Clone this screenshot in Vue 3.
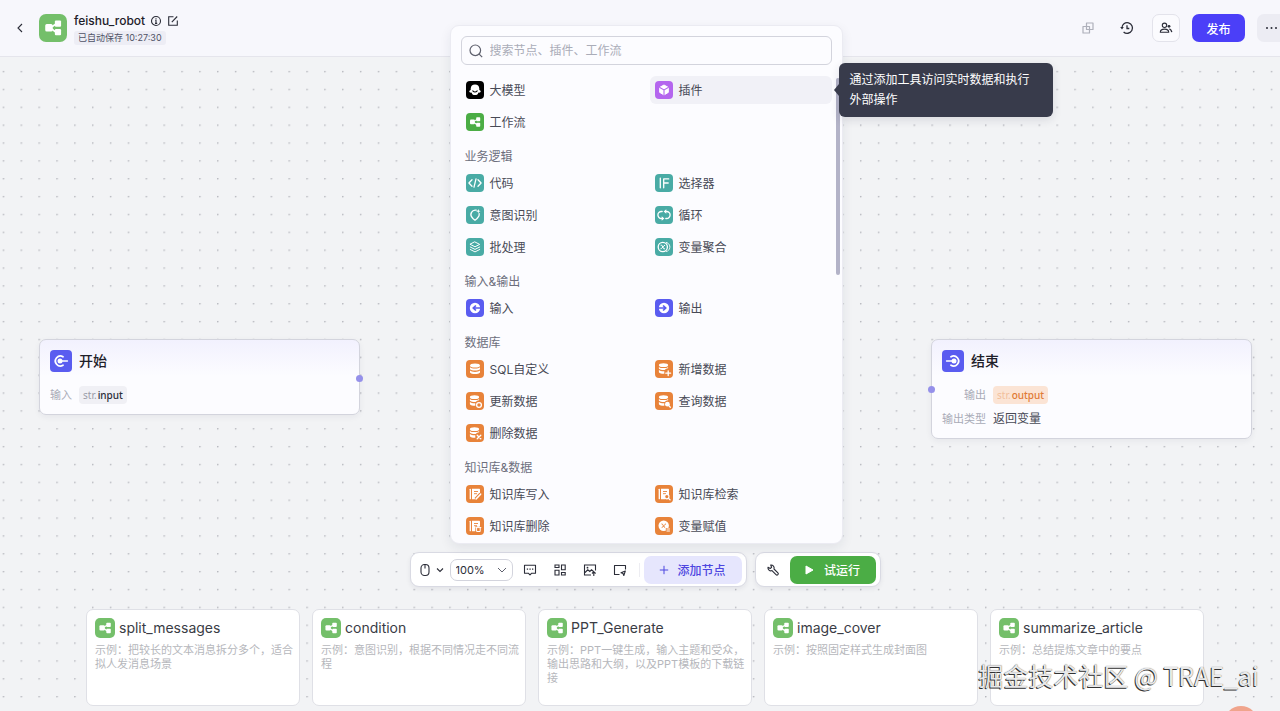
<script setup>
import { ref } from 'vue'

const keyword = ref('')
const zoomLevel = ref('100%')
const hovered = ref('plugin')

const groups = [
  {
    title: '',
    items: [
      { id: 'llm', label: '大模型', tone: 'black' },
      { id: 'plugin', label: '插件', tone: 'purple' },
      { id: 'flow', label: '工作流', tone: 'green' }
    ]
  },
  {
    title: '业务逻辑',
    items: [
      { id: 'code', label: '代码', tone: 'teal' },
      { id: 'if', label: '选择器', tone: 'teal' },
      { id: 'intent', label: '意图识别', tone: 'teal' },
      { id: 'loop', label: '循环', tone: 'teal' },
      { id: 'batch', label: '批处理', tone: 'teal' },
      { id: 'merge', label: '变量聚合', tone: 'teal' }
    ]
  },
  {
    title: '输入&输出',
    items: [
      { id: 'in', label: '输入', tone: 'indigo' },
      { id: 'out', label: '输出', tone: 'indigo' }
    ]
  },
  {
    title: '数据库',
    items: [
      { id: 'db', label: 'SQL自定义', tone: 'orange' },
      { id: 'db-add', label: '新增数据', tone: 'orange' },
      { id: 'db-update', label: '更新数据', tone: 'orange' },
      { id: 'db-query', label: '查询数据', tone: 'orange' },
      { id: 'db-delete', label: '删除数据', tone: 'orange' }
    ]
  },
  {
    title: '知识库&数据',
    items: [
      { id: 'kb-write', label: '知识库写入', tone: 'orange' },
      { id: 'kb-search', label: '知识库检索', tone: 'orange' },
      { id: 'kb-delete', label: '知识库删除', tone: 'orange' },
      { id: 'assign', label: '变量赋值', tone: 'orange' }
    ]
  }
]

const examples = [
  { name: 'split_messages', text: '示例：把较长的文本消息拆分多个，适合拟人发消息场景' },
  { name: 'condition', text: '示例：意图识别，根据不同情况走不同流程' },
  { name: 'PPT_Generate', text: '示例：PPT一键生成，输入主题和受众，输出思路和大纲，以及PPT模板的下载链接' },
  { name: 'image_cover', text: '示例：按照固定样式生成封面图' },
  { name: 'summarize_article', text: '示例：总结提炼文章中的要点' }
]
</script>

<template>
  <div class="page">
    <svg class="sprite" aria-hidden="true">
      <symbol id="i-flow" viewBox="0 0 18 18">
        <g fill="#fff">
          <rect x="4" y="6.500" width="4.800" height="4.800" rx="1" />
          <rect x="10.200" y="4.200" width="4" height="4" rx=".7" />
          <rect x="10.200" y="9.700" width="4" height="4" rx=".7" />
        </g>
        <path d="M8 8.400 11 6.400M8 9.500l3 2.200" stroke="#fff" stroke-width="1.100" />
      </symbol>
      <symbol id="i-llm" viewBox="0 0 18 18">
        <path fill="#fff" d="M9 3.600a4.300 4.300 0 0 1 4.300 4v1.500c1.600.5 2 2.200.6 2.500-.7.200-1.200.1-1.600-.100-.2 1.800-1.300 2.600-3.300 2.600s-3.100-.8-3.300-2.600c-.4.200-.9.300-1.600.100-1.400-.3-1-2 .6-2.500V7.600A4.300 4.300 0 0 1 9 3.600z" />
        <path d="M6.800 9.800q2.200 2.400 4.400 0" fill="none" stroke="#000" stroke-width="1.100" stroke-linecap="round" />
      </symbol>
      <symbol id="i-plugin" viewBox="0 0 18 18">
        <path fill="#fff" stroke="#fff" stroke-linejoin="round" d="m9 4 4.300 2.400v5L9 13.900l-4.300-2.500v-5z" />
        <path d="M4.300 6.300 9 8.900l4.700-2.600M9 8.900V14" fill="none" stroke="#b465ee" stroke-width="1.100" />
      </symbol>
      <symbol id="i-code" viewBox="0 0 18 18">
        <path d="M6 5.800 2.900 9 6 12.200M12 5.800 15.100 9 12 12.200M10 4.900l-2 8.200" class="line" />
      </symbol>
      <symbol id="i-if" viewBox="0 0 18 18">
        <path d="M5.300 4.200v9.600M8.700 13.800V4.900h5M8.700 9h4.500" class="line" />
      </symbol>
      <symbol id="i-intent" viewBox="0 0 18 18">
        <path d="M10.200 4.200a4.400 4.400 0 0 0-4.100 7.300l1.100 1.200L9 14.200l1.800-1.500 1.100-1.200a4.300 4.300 0 0 0 1.300-3.800" class="line" />
        <path d="m12.300 3 .6 1.600 1.600.6-1.600.6-.6 1.600-.6-1.600-1.600-.6 1.600-.6z" fill="#fff" />
      </symbol>
      <symbol id="i-loop" viewBox="0 0 18 18">
        <path d="M7.200 5.500H6.400a3.500 3.500 0 0 0 0 7h1.300M10.800 12.500h.8a3.500 3.500 0 0 0 0-7h-1.300" class="line" />
        <path d="M11.300 3.300v4.400L8.600 5.500zM6.700 10.300v4.400l2.700-2.200z" fill="#fff" />
      </symbol>
      <symbol id="i-batch" viewBox="0 0 18 18">
        <path d="m9 4 4.700 2.400L9 8.800 4.300 6.400zM4.300 9 9 11.400 13.700 9M4.300 11.500 9 13.900l4.700-2.400" class="line thin" />
      </symbol>
      <symbol id="i-merge" viewBox="0 0 18 18">
        <circle cx="7.800" cy="9" r="4.600" class="line" />
        <path d="M11.500 4.500a4.700 4.700 0 0 1 0 9" class="line thin" stroke-dasharray="1.200 1" />
        <path d="M6 7.200h.8l2 3.600h.8M9.700 7.200c-1.200 0-2.300 3.600-3.800 3.600" class="line thin" />
      </symbol>
      <symbol id="i-in" viewBox="0 0 18 18">
        <circle cx="9" cy="9" r="5.200" fill="#fff" />
        <path d="M15 9H7.700M9.900 6.500 7.300 9l2.600 2.500" fill="none" stroke="#5a5cf0" stroke-width="1.700" />
      </symbol>
      <symbol id="i-out" viewBox="0 0 18 18">
        <circle cx="9" cy="9" r="5.200" fill="#fff" />
        <path d="M3 9h7.300M8.100 6.500 10.700 9l-2.600 2.500" fill="none" stroke="#5a5cf0" stroke-width="1.700" />
      </symbol>
      <symbol id="i-db" viewBox="0 0 18 18">
        <g fill="#fff">
          <ellipse cx="9" cy="5.500" rx="5" ry="2" />
          <path d="M4 7.200c1.500 1.700 8.500 1.700 10 0v2c-1.500 1.700-8.500 1.700-10 0zM4 10.600c1.500 1.700 8.500 1.700 10 0v2c-1.500 2-8.500 2-10 0z" />
        </g>
      </symbol>
      <symbol id="i-db-part" viewBox="0 0 18 18">
        <g fill="#fff">
          <ellipse cx="8.500" cy="5.200" rx="4.600" ry="1.900" />
          <path d="M3.900 6.900c1.400 1.600 7.800 1.600 9.200 0v1.400c-1.900.2-2.800 1-3.400 1.800-2.200.1-4.800-.2-5.800-1.300zM3.900 10.100c1 1 3.300 1.300 5.400 1.200v2.500c-2 .1-4.500-.2-5.400-1.500z" />
        </g>
      </symbol>
      <symbol id="i-db-add" viewBox="0 0 18 18">
        <use href="#i-db-part" />
        <path d="M13.200 10.800v4.800M10.800 13.200h4.800" class="line" />
      </symbol>
      <symbol id="i-db-update" viewBox="0 0 18 18">
        <use href="#i-db-part" />
        <circle cx="13" cy="13" r="2.400" class="line" />
      </symbol>
      <symbol id="i-db-query" viewBox="0 0 18 18">
        <use href="#i-db-part" />
        <circle cx="12.400" cy="12.200" r="2.400" fill="#fff" />
        <path d="m13.800 13.600 1.500 1.600" class="line" />
      </symbol>
      <symbol id="i-db-delete" viewBox="0 0 18 18">
        <use href="#i-db-part" />
        <path d="m11.200 11.200 3.600 3.600M14.800 11.200l-3.600 3.600" class="line" />
      </symbol>
      <symbol id="i-book" viewBox="0 0 18 18">
        <path d="M4.300 4.300v9.400" class="line" />
        <path d="M6 3.700h7.300q.7 0 .7.700v4.800l-4 5H6z" fill="#fff" />
        <path d="M8 6.500h4M8 8.700h3" stroke="#e8833a" stroke-width=".9" />
      </symbol>
      <symbol id="i-kb-write" viewBox="0 0 18 18">
        <use href="#i-book" />
        <path d="m9.700 14.200 5-5.400" stroke="#e8833a" stroke-width="3.200" />
        <path d="m10.300 13.800 4.300-4.600" stroke="#fff" stroke-width="1.600" stroke-linecap="round" />
      </symbol>
      <symbol id="i-kb-search" viewBox="0 0 18 18">
        <use href="#i-book" />
        <circle cx="11.800" cy="11.600" r="2.200" fill="#e8833a" stroke="#fff" stroke-width="1.200" />
        <path d="m13.400 13.200 1.700 1.700" class="line" />
      </symbol>
      <symbol id="i-kb-delete" viewBox="0 0 18 18">
        <use href="#i-book" />
        <rect x="9.300" y="9.300" width="5.800" height="5.800" fill="#e8833a" />
        <path d="M9.900 10.600h5M10.600 10.800v3.700h3.600v-3.700M11.600 9.700h1.600" class="line thin" />
      </symbol>
      <symbol id="i-assign" viewBox="0 0 18 18">
        <circle cx="8.700" cy="8.700" r="5.200" fill="#fff" />
        <path d="M6.500 6.900q1.100-.2 1.700 1.500t1.900 2.100M10.900 6.900c-1.300 0-2.600 3.600-4.200 3.600" fill="none" stroke="#e8833a" />
        <rect x="10.800" y="11" width="4.600" height="3.900" fill="#e8833a" />
        <path d="M11.500 12h3.400M11.500 14h3.400" stroke="#fff" />
      </symbol>
    </svg>

    <header class="topbar">
      <button class="plain back" aria-label="返回">
        <svg width="14" height="14" viewBox="0 0 14 14"><path d="M9 3 5 7l4 4" class="ink" /></svg>
      </button>
      <span class="logo"><svg width="28" height="28"><use href="#i-flow" /></svg></span>
      <div class="titles">
        <div class="title-row">
          <h1>feishu_robot</h1>
          <svg width="12" height="12" viewBox="0 0 12 12">
            <circle cx="6" cy="6" r="4.500" class="ink" />
            <path d="M5.200 5.300H6v3M5 8.400h2.200M6 3.200v1" class="ink" />
          </svg>
          <svg width="12" height="12" viewBox="0 0 12 12">
            <path d="M6.500 1.700h-4.800v8.600h8.600V5.500M4.800 7.200l5.400-5.700" class="ink" />
          </svg>
        </div>
        <span class="saved">已自动保存 10:27:30</span>
      </div>
      <div class="actions">
        <button class="plain" aria-label="复制" disabled>
          <svg width="12" height="12" viewBox="0 0 12 12">
            <path d="M4.500 1h6.500v6.500H4.500zM1 4.500h6.500V11H1z" fill="none" stroke="#aeb0ba" stroke-width="1.200" stroke-linejoin="round" />
          </svg>
        </button>
        <button class="plain" aria-label="历史">
          <svg width="14" height="14" viewBox="0 0 14 14">
            <path d="M1.900 7a5.300 5.300 0 1 1 1.700 3.900M7 4.300V7.500h2.300" class="ink bold" />
            <path d="M.2 6h3.600L2 8.400z" fill="#2b2d38" />
          </svg>
        </button>
        <button class="square" aria-label="协作者">
          <svg width="14" height="14" viewBox="0 0 14 14">
            <circle cx="5.500" cy="4.300" r="2.200" class="ink" />
            <path d="M1.300 11.300c0-4.200 8.400-4.200 8.400 0z" class="ink" stroke-linejoin="round" />
            <circle cx="10" cy="5.300" r="1.400" fill="#2b2d38" />
            <path d="M10.400 7.900q2 .8 2.400 3.200" class="ink bold" />
          </svg>
        </button>
        <button class="publish">发布</button>
        <button class="more" aria-label="更多">
          <svg width="14" height="4" viewBox="0 0 14 4" fill="#2b2d38">
            <circle cx="2" cy="2" r="1" /><circle cx="6.500" cy="2" r="1" /><circle cx="11" cy="2" r="1" />
          </svg>
        </button>
      </div>
    </header>

    <main class="canvas">
      <svg class="grid" aria-hidden="true">
        <defs>
          <pattern id="dots" x="2.700" y="13.900" width="17.860" height="17.860" patternUnits="userSpaceOnUse">
            <circle cx=".8" cy=".8" r=".75" fill="#a3a5ad" />
          </pattern>
        </defs>
        <rect width="100%" height="100%" fill="url(#dots)" />
      </svg>

      <section class="node start">
        <div class="node-head">
          <span class="node-icon">
            <svg width="22" height="22" viewBox="0 0 22 22">
              <path d="M13 6.700a5 5 0 1 0 0 8.600" class="line fat" />
              <circle cx="10" cy="11" r="2.500" fill="#fff" />
              <path d="M10 11h7.500" class="line" />
            </svg>
          </span>
          <h2>开始</h2>
        </div>
        <dl>
          <dt>输入</dt>
          <dd><span class="tag"><i>str.</i>input</span></dd>
        </dl>
        <span class="port"></span>
      </section>

      <section class="node end">
        <div class="node-head">
          <span class="node-icon">
            <svg width="22" height="22" viewBox="0 0 22 22">
              <path d="M9 6.700a5 5 0 1 1 0 8.600" class="line fat" />
              <circle cx="12" cy="11" r="2.500" fill="#fff" />
              <path d="M12 11H4.500" class="line" />
            </svg>
          </span>
          <h2>结束</h2>
        </div>
        <dl>
          <dt>输出</dt>
          <dd><span class="tag warm"><i>str.</i>output</span></dd>
          <dt>输出类型</dt>
          <dd class="value">返回变量</dd>
        </dl>
        <span class="port"></span>
      </section>

      <div class="dock">
        <div class="tools">
          <div class="popup">
            <label class="search">
              <svg width="14" height="14" viewBox="0 0 14 14">
                <circle cx="6.300" cy="6.300" r="5.300" fill="none" stroke="#5f616e" stroke-width="1.200" />
                <path d="m10.200 10.200 3 3" stroke="#5f616e" stroke-width="1.200" />
              </svg>
              <input v-model="keyword" type="text" aria-label="搜索" placeholder="搜索节点、插件、工作流" />
            </label>
            <div class="list">
              <section v-for="g in groups" :key="g.title">
                <h3 v-if="g.title">{{ g.title }}</h3>
                <div class="items">
                  <button
                    v-for="it in g.items"
                    :key="it.id"
                    class="item"
                    :class="{ active: hovered === it.id }"
                    @mouseenter="hovered = it.id"
                  >
                    <span class="chip" :class="it.tone"><svg width="18" height="18"><use :href="'#i-' + it.id" /></svg></span>
                    <span class="label">{{ it.label }}</span>
                  </button>
                </div>
              </section>
            </div>
            <span class="thumb"></span>
            <div class="tooltip" role="tooltip">通过添加工具访问实时数据和执行外部操作</div>
          </div>

          <div class="bar">
            <button class="plain mouse" aria-label="交互模式">
              <svg width="10" height="14" viewBox="0 0 10 14">
                <rect x="1" y="1.500" width="8" height="11" rx="3.500" class="ink" />
                <path d="M5 1.500v4" class="ink" />
              </svg>
              <svg width="8" height="8" viewBox="0 0 8 8"><path d="m1 2.500 3 3 3-3" class="ink" /></svg>
            </button>
            <span class="zoom">
              <select v-model="zoomLevel" aria-label="缩放">
                <option>50%</option>
                <option>100%</option>
                <option>200%</option>
              </select>
              <svg width="10" height="8" viewBox="0 0 10 8"><path d="m1 2 4 4 4-4" class="ink soft" /></svg>
            </span>
            <button class="plain tool" aria-label="注释">
              <svg width="14" height="14" viewBox="0 0 14 14">
                <path d="M1.500 2.200h11v8H8.700L7 11.900l-1.700-1.700H1.500z" class="ink" stroke-linejoin="round" />
                <path d="M3.800 6.200h1.300M6.400 6.200h1.300M9 6.200h1.300" class="ink bold" />
              </svg>
            </button>
            <button class="plain tool" aria-label="整理布局">
              <svg width="14" height="14" viewBox="0 0 14 14">
                <path d="M2 2h4v2.500H2zM2 7.200h4V12H2zM8.500 2h3.700v4.800H8.500zM8.500 9.500h3.700V12H8.500z" class="ink" />
              </svg>
            </button>
            <button class="plain tool" aria-label="导出图片">
              <svg width="14" height="14" viewBox="0 0 14 14">
                <path d="M8 12H1.500V2h11v5.500M2 9.500l2.800-2.700 2 1.700 1.700-1.700 2 1.700M10.800 13V9.200M9 10.500l1.800-1.800 1.800 1.800" class="ink" />
                <circle cx="4.500" cy="4.700" r=".9" fill="#2b2d38" />
              </svg>
            </button>
            <button class="plain tool" aria-label="小地图">
              <svg width="14" height="14" viewBox="0 0 14 14">
                <path d="M6.500 11.500h-5v-9h11v4" class="ink" stroke-linejoin="round" />
                <path d="m12.300 8-4.300 1.700 2 .8.800 2z" class="ink" stroke-linejoin="round" />
              </svg>
            </button>
            <span class="divider"></span>
            <button class="add">
              <svg width="10" height="10" viewBox="0 0 10 10"><path d="M5 .8v8.400M.8 5h8.400" stroke="#4d46e0" /></svg>
              <span class="label">添加节点</span>
            </button>
          </div>

          <div class="bar">
            <button class="plain wrench" aria-label="调试">
              <svg width="14" height="14" viewBox="0 0 14 14">
                <path d="M2 4.200 4.200 5.500 5.600 4.300 4.700 2.100A3 3 0 0 1 8 6L11.900 9.800a1.300 1.300 0 0 1-1.900 1.900L6 7.600A3 3 0 0 1 2 4.200z" class="ink" stroke-linejoin="round" />
              </svg>
            </button>
            <button class="run">
              <svg width="9" height="10" viewBox="0 0 9 10"><path d="M1 1v8l7-4z" fill="#fff" stroke="#fff" stroke-linejoin="round" /></svg>
              <span class="label">试运行</span>
            </button>
          </div>
        </div>

        <div class="cards">
          <article v-for="e in examples" :key="e.name" class="card">
            <div class="card-head">
              <span class="card-icon"><svg width="20" height="20"><use href="#i-flow" /></svg></span>
              <h4>{{ e.name }}</h4>
            </div>
            <p>{{ e.text }}</p>
          </article>
        </div>
      </div>

      <span class="bubble"></span>
      <span class="watermark">掘金技术社区 @ TRAE_ai</span>
    </main>
  </div>
</template>

<style>
html,
body {
  margin: 0;
  overflow: hidden;
}
</style>

<style scoped>
.page {
  display: flex;
  flex-direction: column;
  min-height: 100vh;
  font-family: Inter, "Noto Sans CJK SC", sans-serif;
  font-size: 12px;
  color: #484a56;
  background: #f2f3f5;
}
.page * {
  box-sizing: border-box;
}
h1,
h2,
h3,
h4,
p,
dl,
dd {
  margin: 0;
}
button {
  display: flex;
  align-items: center;
  justify-content: center;
  flex-shrink: 0;
  border: 0;
  padding: 0;
  font: inherit;
  color: inherit;
  background: none;
}
svg {
  display: block;
  flex-shrink: 0;
}
.sprite {
  position: absolute;
  width: 0;
  height: 0;
}
.line {
  fill: none;
  stroke: #fff;
  stroke-width: 1.3;
  stroke-linecap: round;
  stroke-linejoin: round;
}
.thin {
  stroke-width: 1;
}
.fat {
  stroke-width: 1.8;
}
.ink {
  fill: none;
  stroke: #2b2d38;
  stroke-width: 1.1;
}
.ink.bold {
  stroke-width: 1.3;
}
.ink.soft {
  stroke: #5f616e;
  stroke-width: 1;
}

/* top bar */
.topbar {
  display: flex;
  align-items: center;
  height: 57px;
  overflow: hidden;
  background: #f7f7fc;
  border-bottom: 1px solid #e5e5ec;
}
.back {
  width: 14px;
  margin: 0 12px 0 13px;
}
.logo {
  display: flex;
  border-radius: 7px;
  background: #74bf6a;
}
.titles {
  display: flex;
  flex-direction: column;
  align-items: flex-start;
  gap: 2px;
  margin-left: 7px;
  padding-top: 2px;
}
.title-row {
  display: flex;
  align-items: center;
  gap: 5px;
  height: 16px;
}
h1 {
  font-size: 12px;
  line-height: 16px;
  font-weight: 500;
  color: #1e2029;
}
.saved {
  padding: 0 4px;
  border-radius: 3px;
  font-size: 9px;
  line-height: 14px;
  color: #4f5265;
  background: #ededf5;
}
.actions {
  display: flex;
  align-items: center;
  gap: 12px;
  margin-left: auto;
  margin-right: -6px;
}
.actions .plain {
  width: 27px;
  height: 28px;
}
.square {
  width: 28px;
  height: 28px;
  border: 1px solid #e3e3eb;
  border-radius: 7px;
  background: #fbfbfe;
}
.publish {
  width: 53px;
  height: 28px;
  border-radius: 7px;
  font-weight: 500;
  color: #fff;
  background: #4b3ff8;
}
.more {
  width: 29px;
  height: 28px;
  border-radius: 7px;
  background: #ececf3;
}

/* canvas and nodes */
.canvas {
  position: relative;
  flex: 1;
  display: flex;
  flex-direction: column;
  justify-content: flex-end;
}
.grid {
  position: absolute;
  inset: 0;
  width: 100%;
  height: 100%;
}
.node {
  position: absolute;
  top: 282px;
  width: 321px;
  padding: 10px;
  border: 1px solid #d3d4dd;
  border-radius: 7px;
  background: linear-gradient(#f2f1fe, #fcfcff 36px);
  box-shadow: 0 2px 6px rgba(30, 34, 60, 0.06);
}
.start {
  left: 39px;
}
.end {
  right: 28px;
}
.node-head {
  display: flex;
  align-items: center;
  gap: 7px;
  height: 22px;
}
.node-icon {
  border-radius: 4px;
  background: #5a5cf0;
}
h2 {
  font-size: 14px;
  line-height: 22px;
  font-weight: 500;
  color: #1e2029;
}
dl {
  display: grid;
  grid-template-columns: auto 1fr;
  gap: 6px 7px;
  align-items: center;
  margin-top: 14px;
  line-height: 18px;
}
dt {
  text-align: right;
  font-size: 11px;
  color: #a9abb7;
}
.tag {
  display: inline-block;
  padding: 0 4px;
  border-radius: 4px;
  font-family: "Noto Sans", sans-serif;
  font-size: 10px;
  font-weight: 500;
  color: #2b2d38;
  background: #f0f0f5;
}
.tag i {
  margin-right: 1px;
  font-style: normal;
  font-weight: 400;
  color: #9a9ca8;
}
.tag.warm {
  color: #e07a36;
  background: #fbe4d5;
}
.tag.warm i {
  color: #f2bf9c;
}
.port {
  position: absolute;
  width: 7px;
  height: 7px;
  border-radius: 50%;
  background: #9590ea;
}
.start .port {
  right: -4px;
  top: 35px;
}
.end .port {
  left: -4px;
  top: 46px;
}

/* bottom dock */
.dock {
  position: relative;
  padding: 0 76px 5px 86px;
}
.tools {
  position: relative;
  display: flex;
  justify-content: center;
  gap: 8px;
  width: max-content;
  margin: 0 auto 22px;
}
.bar {
  display: flex;
  align-items: center;
  padding: 0 4px;
  height: 35px;
  border: 1px solid #d9dae3;
  border-radius: 9px;
  background: #fff;
  box-shadow: 0 2px 5px rgba(30, 34, 60, 0.07);
}
.label {
  padding-bottom: 1px;
}
.mouse {
  gap: 6px;
  width: 34px;
  height: 28px;
}
.zoom {
  display: flex;
  align-items: center;
  position: relative;
  width: 63px;
  height: 22px;
  margin: 0 2px 0 1px;
  border: 1px solid #d3d4dd;
  border-radius: 7px;
}
.zoom select {
  width: 100%;
  height: 20px;
  padding: 0 5px;
  border: 0;
  appearance: none;
  font: inherit;
  font-size: 11px;
  color: #2b2d38;
  background: none;
}
.zoom svg {
  position: absolute;
  right: 5px;
  pointer-events: none;
}
.tool {
  width: 30px;
  height: 28px;
}
.divider {
  width: 1px;
  height: 14px;
  margin: 0 4px;
  background: #ededf2;
}
.add {
  gap: 8px;
  width: 98px;
  height: 28px;
  border-radius: 7px;
  font-weight: 500;
  color: #4d46e0;
  background: #e6e6fd;
}
.wrench {
  width: 26px;
  height: 28px;
  margin-right: 4px;
}
.run {
  gap: 10px;
  width: 86px;
  height: 28px;
  border-radius: 7px;
  font-weight: 500;
  color: #fff;
  background: #4bad45;
}

/* node picker */
.popup {
  position: absolute;
  z-index: 2;
  left: 40px;
  bottom: calc(100% + 8px);
  width: 393px;
  padding: 10px 10px 3px;
  border: 1px solid #ebebf2;
  border-radius: 9px;
  background: #fcfcff;
  box-shadow: 0 4px 12px rgba(30, 34, 60, 0.08);
}
.search {
  display: flex;
  align-items: center;
  gap: 7px;
  height: 29px;
  padding: 0 7px;
  border: 1px solid #d3d4dd;
  border-radius: 6px;
}
.search input {
  flex: 1;
  min-width: 0;
  padding: 0;
  border: 0;
  outline: 0;
  font: inherit;
  background: none;
}
.search input::placeholder {
  color: #aaacb8;
}
.list {
  padding-top: 11px;
}
h3 {
  padding: 12px 4px 3px;
  font-size: 12px;
  line-height: 18px;
  font-weight: 400;
  color: #6d6f7d;
}
.items {
  display: grid;
  grid-template-columns: 1fr 1fr;
  gap: 4px 7px;
}
.item {
  justify-content: flex-start;
  gap: 6px;
  height: 28px;
  padding: 0 5px;
  border-radius: 6px;
}
.item.active {
  background: #f1f1f7;
}
.chip {
  border-radius: 4px;
}
.black {
  background: #000;
}
.purple {
  background: #b465ee;
}
.green {
  background: #4bad45;
}
.teal {
  background: #49aba5;
}
.indigo {
  background: #5a5cf0;
}
.orange {
  background: #e8833a;
}
.thumb {
  position: absolute;
  top: 52px;
  right: 2px;
  width: 4px;
  height: 197px;
  border-radius: 2px;
  background: #b3b3c8;
}
.tooltip {
  position: absolute;
  left: 388px;
  top: 37px;
  width: 214px;
  padding: 7px 14px 7px 11px;
  border-radius: 6px;
  line-height: 20px;
  color: #fff;
  background: #383b4b;
  box-shadow: 0 3px 10px rgba(30, 34, 60, 0.12);
}
.tooltip::before {
  content: "";
  position: absolute;
  left: -5px;
  top: 21px;
  border: solid transparent;
  border-width: 6px 5px 6px 0;
  border-right-color: #383b4b;
}

/* example cards */
.cards {
  display: grid;
  grid-template-columns: repeat(5, 1fr);
  gap: 12px;
}
.card {
  min-height: 97px;
  padding: 8px 5px 8px 8px;
  border: 1px solid #dfe0e6;
  border-radius: 7px;
  background: #fff;
}
.card-head {
  display: flex;
  align-items: center;
  gap: 4px;
  height: 20px;
}
.card-icon {
  border-radius: 5px;
  background: #74bf6a;
}
h4 {
  font-size: 14px;
  line-height: 20px;
  font-weight: 400;
  color: #3a3c45;
}
.card p {
  margin-top: 5px;
  font-size: 11px;
  line-height: 14px;
  color: #b6b7bc;
}
.bubble {
  position: absolute;
  right: 22px;
  bottom: -29px;
  width: 34px;
  height: 34px;
  border-radius: 50%;
  background: #f0a48c;
}
.watermark {
  position: absolute;
  right: 21px;
  bottom: 18px;
  font-family: "Noto Sans CJK SC", sans-serif;
  font-size: 25px;
  line-height: 36px;
  white-space: nowrap;
  color: #e9e9ea;
  text-shadow: -1px 1px 0 #333, 0 0 1px #555;
}
</style>
